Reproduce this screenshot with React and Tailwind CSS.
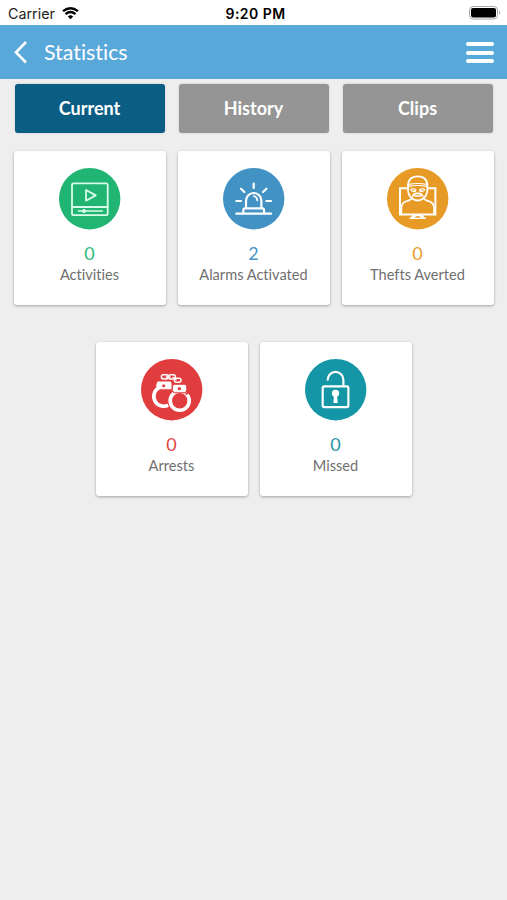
const Badge = ({ color, children }) => (
  <svg
    className="block h-[61.4px] w-[61.4px] overflow-visible"
    viewBox="28 24 184 184"
    fill="none"
    stroke="white"
    strokeWidth="6.500"
    strokeLinecap="round"
    strokeLinejoin="round"
  >
    <circle cx="120" cy="116" r="92" fill={color} stroke="none" />
    {children}
  </svg>
);

const VideoIcon = () => (
  <Badge color="#20b573">
    <g stroke="#d9fbe9" strokeWidth="5.500">
      <rect x="67" y="70" width="107" height="95" rx="5" />
      <path d="M67 141H174" />
      <path d="M109 90V122L138 106Z" />
      <path d="M86 153H158" strokeWidth="4.500" />
      <circle cx="103" cy="153" r="4.500" fill="#d9fbe9" strokeWidth="3" />
    </g>
  </Badge>
);

const AlarmIcon = () => (
  <Badge color="#4292c4">
    <path d="M68 161H172" />
    <path d="M89 160V150Q89 145 94 145H146Q151 145 151 150V160" />
    <path d="M97 144V122A23 23 0 0 1 143 122V144" />
    <path d="M120 108Q130 110 131 122" strokeWidth="5" />
    <path d="M120 71V84M82 86L92 96M158 86L148 96M68 123H82M158 123H172" />
  </Badge>
);

const ThiefIcon = () => (
  <Badge color="#e79a25">
    <path d="M88 85H67V163H173V85H152" strokeLinejoin="miter" strokeWidth="6" />
    <path d="M71 161V142Q73 125 92 122L102 116M169 161V142Q167 125 148 122L138 116" strokeWidth="5" />
    <path d="M106 165Q105 172 97 175H143Q135 172 134 165" fill="white" strokeWidth="4" />
    <path d="M110 173Q114 168 120 168Q126 168 130 173Z" fill="#e79a25" stroke="none" />
    <path
      d="M91 78Q91 49 120 49Q149 49 149 78V90Q148 108 134 117Q120 126 106 117Q92 108 91 90Z"
      fill="#e79a25"
      strokeWidth="5.500"
    />
    <path d="M93 73Q120 68 147 73M93 79Q120 74 147 79" strokeWidth="3.500" />
    <path d="M97 87Q107 82 117 89Q115 97 107 97Q99 96 97 87ZM143 87Q133 82 123 89Q125 97 133 97Q141 96 143 87Z" fill="white" stroke="none" />
    <path d="M103 90H110M130 90H137" stroke="#e79a25" strokeWidth="3" />
    <path d="M105 108Q109 99 120 100Q131 99 135 108M112 108H128" strokeWidth="5" />
  </Badge>
);

const HandcuffsIcon = () => (
  <Badge color="#e13c3e">
    <g strokeWidth="4.500">
      <rect x="89" y="71" width="21" height="13" rx="6.500" />
      <rect x="110" y="71" width="21" height="13" rx="6.500" />
      <rect x="128" y="82" width="20" height="12" rx="6" />
      <path d="M104 78H115M124 80Q130 81 133 86" />
    </g>
    <path d="M82 110A28 28 0 1 0 110 162" strokeWidth="11" strokeLinecap="butt" />
    <path d="M78 93H116L118 98V113H80L75 104Z" fill="white" strokeWidth="3" />
    <circle cx="96" cy="104" r="4.500" fill="#e13c3e" stroke="none" />
    <circle cx="144" cy="149" r="35" stroke="#e13c3e" strokeWidth="4" />
    <circle cx="144" cy="149" r="28.500" strokeWidth="11" />
    <path d="M124 100H162L165 104V120L160 125H127L121 118Z" fill="white" stroke="#e13c3e" strokeWidth="3" />
    <circle cx="143" cy="113" r="5" fill="#e13c3e" stroke="none" />
    <path d="M162 130L176 119" stroke="#e13c3e" strokeWidth="6" strokeLinecap="butt" />
  </Badge>
);

const LockIcon = () => (
  <Badge color="#1496a6">
    <rect x="81" y="106" width="77" height="62" rx="5" />
    <path d="M96 86A23.500 23.500 0 0 1 143 86V105" />
    <circle cx="119.500" cy="127" r="11" fill="white" stroke="none" />
    <path d="M115 131H124L126 156H113Z" fill="white" stroke="none" />
  </Badge>
);

const tabs = [
  { label: "Current", style: "bg-[#0b5d84]" },
  { label: "History", style: "bg-[#959595]" },
  { label: "Clips", style: "bg-[#959595]" },
];

const rows = [
  [
    { label: "Activities", value: 0, color: "text-[#2dba7c]", Icon: VideoIcon },
    { label: "Alarms Activated", value: 2, color: "text-[#4a95c7]", Icon: AlarmIcon },
    { label: "Thefts Averted", value: 0, color: "text-[#e89c30]", Icon: ThiefIcon },
  ],
  [
    { label: "Arrests", value: 0, color: "text-[#e04648]", Icon: HandcuffsIcon },
    { label: "Missed", value: 0, color: "text-[#1f98a8]", Icon: LockIcon },
  ],
];

const StatCard = ({ label, value, color, Icon }) => (
  <div className="flex h-[154px] w-[152px] flex-col items-center rounded-[3px] bg-white pt-[17px] shadow-[0_1px_3px_rgba(0,0,0,0.32)]">
    <Icon />
    <div className={`mt-[12px] text-[18px] leading-6 ${color}`}>{value}</div>
    <div className="text-[14.6px] leading-5 whitespace-nowrap text-[#707070]">{label}</div>
  </div>
);

const StatusBar = () => (
  <div className="flex h-[25px] items-center justify-between bg-white pr-[6px] pl-2 font-['Inter',sans-serif] text-black">
    <div className="flex w-[150px] items-center gap-[7px] pt-[2px]">
      <span className="text-[14.3px] leading-5 text-[#222]">Carrier</span>
      <svg className="h-[13px] w-[17px]" viewBox="0 0 17 13">
        <path d="M8.500 12.200L5.800 9.400Q8.500 7.200 11.200 9.400Z" />
        <path d="M3.500 7.100Q8.500 3 13.500 7.100M1 4.200Q8.500 -1.700 16 4.200" fill="none" stroke="black" strokeWidth="2.300" />
      </svg>
    </div>
    <span className="pt-[2px] pl-[2px] text-[14px] leading-5 font-semibold tracking-[0.45px]">9:20 PM</span>
    <div className="flex w-[150px] justify-end">
      <svg className="h-[15px] w-[33px]" viewBox="0 0 33 15">
        <rect x="1.500" y="1.500" width="28" height="12.500" rx="3.500" fill="white" stroke="#aaa" />
        <rect x="3" y="3" width="25" height="9.500" rx="2" />
        <path d="M31 5.500Q33 7.500 31 9.500Z" fill="#999" />
      </svg>
    </div>
  </div>
);

export default function App() {
  return (
    <div className="min-h-screen bg-[#eeeeee] font-['Lato',sans-serif] [font-variant-ligatures:none]">
      <StatusBar />
      <header className="flex h-[54px] items-center bg-[#58a8da] pr-[13px] pl-[13px] text-white">
        <svg className="h-6 w-4" viewBox="0 0 16 24" fill="none" stroke="white" strokeWidth="2.600">
          <path d="M13 2L3 12.300L13 22.500" />
        </svg>
        <h1 className="ml-[15px] flex-1 text-[21.4px] leading-7">Statistics</h1>
        <div className="flex w-7 flex-col gap-[4.500px] pt-px">
          <span className="h-1 rounded-full bg-white" />
          <span className="h-1 rounded-full bg-white" />
          <span className="h-1 rounded-full bg-white" />
        </div>
      </header>
      <nav className="flex justify-center gap-[14px] pt-[5px]">
        {tabs.map(({ label, style }) => (
          <button
            key={label}
            className={`h-[49px] w-[150px] rounded-[3px] text-[18px] font-bold text-white shadow-[0_0_2px_rgba(0,0,0,0.2)] ${style}`}
          >
            {label}
          </button>
        ))}
      </nav>
      <main className="flex flex-col gap-[37px] pt-[18px]">
        {rows.map((row, i) => (
          <div key={i} className="flex justify-center gap-3">
            {row.map((card) => (
              <StatCard key={card.label} {...card} />
            ))}
          </div>
        ))}
      </main>
    </div>
  );
}
